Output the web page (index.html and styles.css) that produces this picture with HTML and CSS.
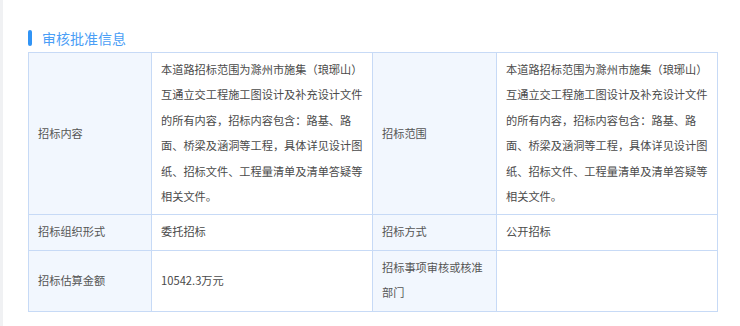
FILE: index.html
```html
<!DOCTYPE html>
<html lang="zh-CN">
<head>
<meta charset="utf-8">
<link rel="stylesheet" href="styles.css">
</head>
<body>
<div class="page">
  <div class="section">
    <h2 class="title"><span class="bar"></span>审核批准信息</h2>
    <table class="info">
      <colgroup>
        <col class="c-label"><col class="c-value"><col class="c-label2"><col class="c-value">
      </colgroup>
      <tr class="r1">
        <th>招标内容</th>
        <td>本道路招标范围为滁州市施集（琅琊山）互通立交工程施工图设计及补充设计文件的所有内容，招标内容包含：路基、路面、桥梁及涵洞等工程，具体详见设计图纸、招标文件、工程量清单及清单答疑等相关文件。</td>
        <th>招标范围</th>
        <td>本道路招标范围为滁州市施集（琅琊山）互通立交工程施工图设计及补充设计文件的所有内容，招标内容包含：路基、路面、桥梁及涵洞等工程，具体详见设计图纸、招标文件、工程量清单及清单答疑等相关文件。</td>
      </tr>
      <tr>
        <th>招标组织形式</th>
        <td>委托招标</td>
        <th>招标方式</th>
        <td>公开招标</td>
      </tr>
      <tr>
        <th>招标估算金额</th>
        <td>10542.3万元</td>
        <th>招标事项审核或核准部门</th>
        <td></td>
      </tr>
    </table>
  </div>
</div>
</body>
</html>
```

FILE: styles.css
```css
html, body {
  margin: 0;
  padding: 0;
  background: #ffffff;
}

.page {
  border-left: 3px solid #f0f1f3;
  min-height: 326px;
  box-sizing: border-box;
  padding: 30px 0 0 25px;
  font-family: "Noto Sans CJK SC", "Noto Sans", sans-serif;
}

.section {
  width: 689px;
}

.title {
  margin: 0 0 6px 0;
  display: flex;
  align-items: center;
  height: 16px;
  font-size: 14px;
  line-height: 16px;
  font-weight: normal;
  color: #4a9ef6;
}

.bar {
  display: inline-block;
  width: 4px;
  height: 16px;
  border-radius: 2px;
  background: #3194f5;
  margin-right: 10px;
}

.info {
  width: 689px;
  table-layout: fixed;
  border-collapse: collapse;
  border: 1px solid #c7daf6;
  font-size: 11.2px;
  line-height: 25.4px;
  color: #4a4a4a;
}

.c-label { width: 123px; }
.c-label2 { width: 124px; }
.c-value { width: 221px; }

.info th,
.info td {
  border: 1px solid #c7daf6;
  padding: 4px 6px 5px 9px;
  text-align: left;
  vertical-align: middle;
  font-weight: normal;
  word-break: break-all;
}

.info th {
  background: #f2f7fe;
  color: #555555;
}

.info td {
  background: #ffffff;
}
```
